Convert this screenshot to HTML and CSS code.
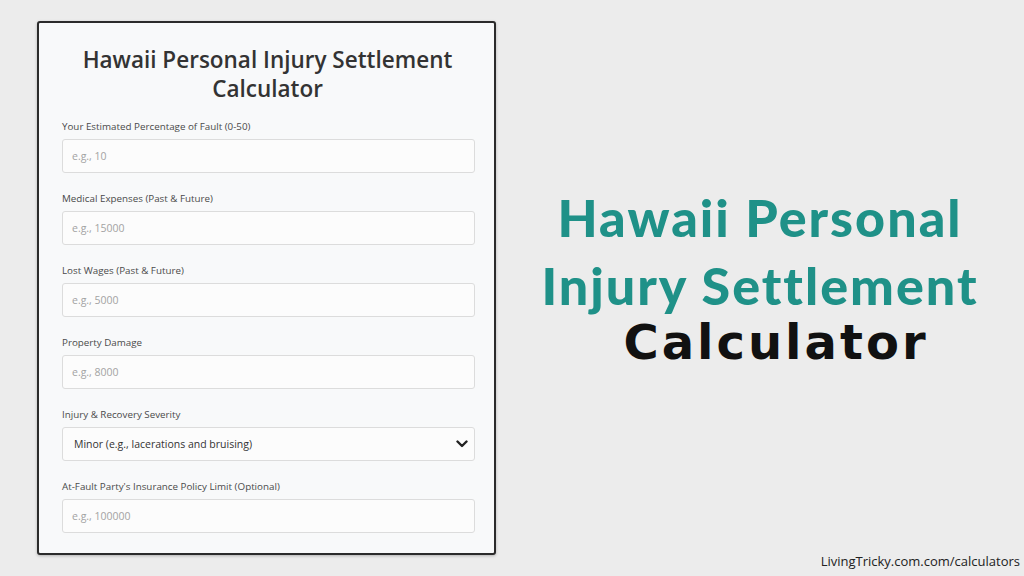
FILE: index.html
```html
<!DOCTYPE html>
<html lang="en">
<head>
<meta charset="utf-8">
<title>Hawaii Personal Injury Settlement Calculator</title>
<link rel="stylesheet" href="styles.css">
</head>
<body>
<div class="page">
  <div class="card">
    <h1 class="card-title">Hawaii Personal Injury Settlement Calculator</h1>
    <div class="field">
      <label class="field-label">Your Estimated Percentage of Fault (0-50)</label>
      <div class="input"><span class="placeholder">e.g., 10</span></div>
    </div>
    <div class="field">
      <label class="field-label">Medical Expenses (Past &amp; Future)</label>
      <div class="input"><span class="placeholder">e.g., 15000</span></div>
    </div>
    <div class="field">
      <label class="field-label">Lost Wages (Past &amp; Future)</label>
      <div class="input"><span class="placeholder">e.g., 5000</span></div>
    </div>
    <div class="field">
      <label class="field-label">Property Damage</label>
      <div class="input"><span class="placeholder">e.g., 8000</span></div>
    </div>
    <div class="field">
      <label class="field-label">Injury &amp; Recovery Severity</label>
      <div class="input select"><span class="select-value">Minor (e.g., lacerations and bruising)</span>
        <svg class="chevron" width="12" height="8" viewBox="0 0 12 8"><path d="M1.5 1.5 L6 6 L10.5 1.5" fill="none" stroke="#222" stroke-width="2.4" stroke-linecap="round" stroke-linejoin="round"/></svg>
      </div>
    </div>
    <div class="field">
      <label class="field-label">At-Fault Party's Insurance Policy Limit (Optional)</label>
      <div class="input"><span class="placeholder">e.g., 100000</span></div>
    </div>
  </div>
  <div class="side">
    <div class="headline">
      <div class="headline-teal">Hawaii Personal</div>
      <div class="headline-teal">Injury Settlement</div>
      <div class="headline-black">Calculator</div>
    </div>
    <div class="footer">LivingTricky.com.com/calculators</div>
  </div>
</div>
</body>
</html>
```
FILE: styles.css
```css
html, body {
  margin: 0;
  padding: 0;
}
body {
  background: #ececec;
  width: 1024px;
  height: 576px;
  overflow: hidden;
}
.page {
  display: flex;
  height: 576px;
}
.card {
  margin: 21px 0 0 37px;
  width: 459px;
  height: 534px;
  box-sizing: border-box;
  border: 2px solid #2b2b2b;
  border-radius: 3px;
  background: #f8f9fa;
  padding: 22px 21px 0 23px;
  box-shadow: 0 1px 3px rgba(0,0,0,0.25);
  font-family: "Open Sans", "Noto Sans", sans-serif;
}
.card-title {
  margin: 0 0 16px 0;
  text-align: center;
  font-size: 22.5px;
  line-height: 29px;
  font-weight: 600;
  color: #333;
  padding: 0 8px;
}
.field {
  margin-bottom: 18px;
}
.field-label {
  display: block;
  font-size: 9.8px;
  line-height: 16px;
  font-weight: 500;
  color: #4a4a4a;
  margin-bottom: 4px;
}
.input {
  height: 34px;
  box-sizing: border-box;
  border: 1px solid #dcdcdc;
  border-radius: 3px;
  background: #fcfcfc;
  display: flex;
  align-items: center;
  padding: 0 9px;
  width: 413px;
}
.placeholder {
  font-size: 10.5px;
  color: #a3a3a3;
}
.select {
  justify-content: space-between;
  padding: 0 6px 0 11px;
}
.select-value {
  font-size: 10.5px;
  color: #333;
}
.chevron {
  display: block;
}
.side {
  flex: 1;
  display: flex;
  flex-direction: column;
}
.headline {
  margin-top: 183px;
  text-align: center;
  font-weight: 900;
}
.headline-teal {
  color: #1f9188;
  font-family: "Lato", "Inter", sans-serif;
  font-size: 52px;
  line-height: 68px;
  letter-spacing: 2px;
}
.headline-black {
  color: #111;
  font-family: "DejaVu Sans", sans-serif;
  font-weight: 700;
  font-size: 48px;
  line-height: 46px;
  letter-spacing: 3px;
  padding-left: 32px;
}
.footer {
  margin-top: auto;
  align-self: flex-end;
  padding: 0 4px 6px 0;
  font-family: "Open Sans", sans-serif;
  font-size: 13px;
  color: #222;
}
```
